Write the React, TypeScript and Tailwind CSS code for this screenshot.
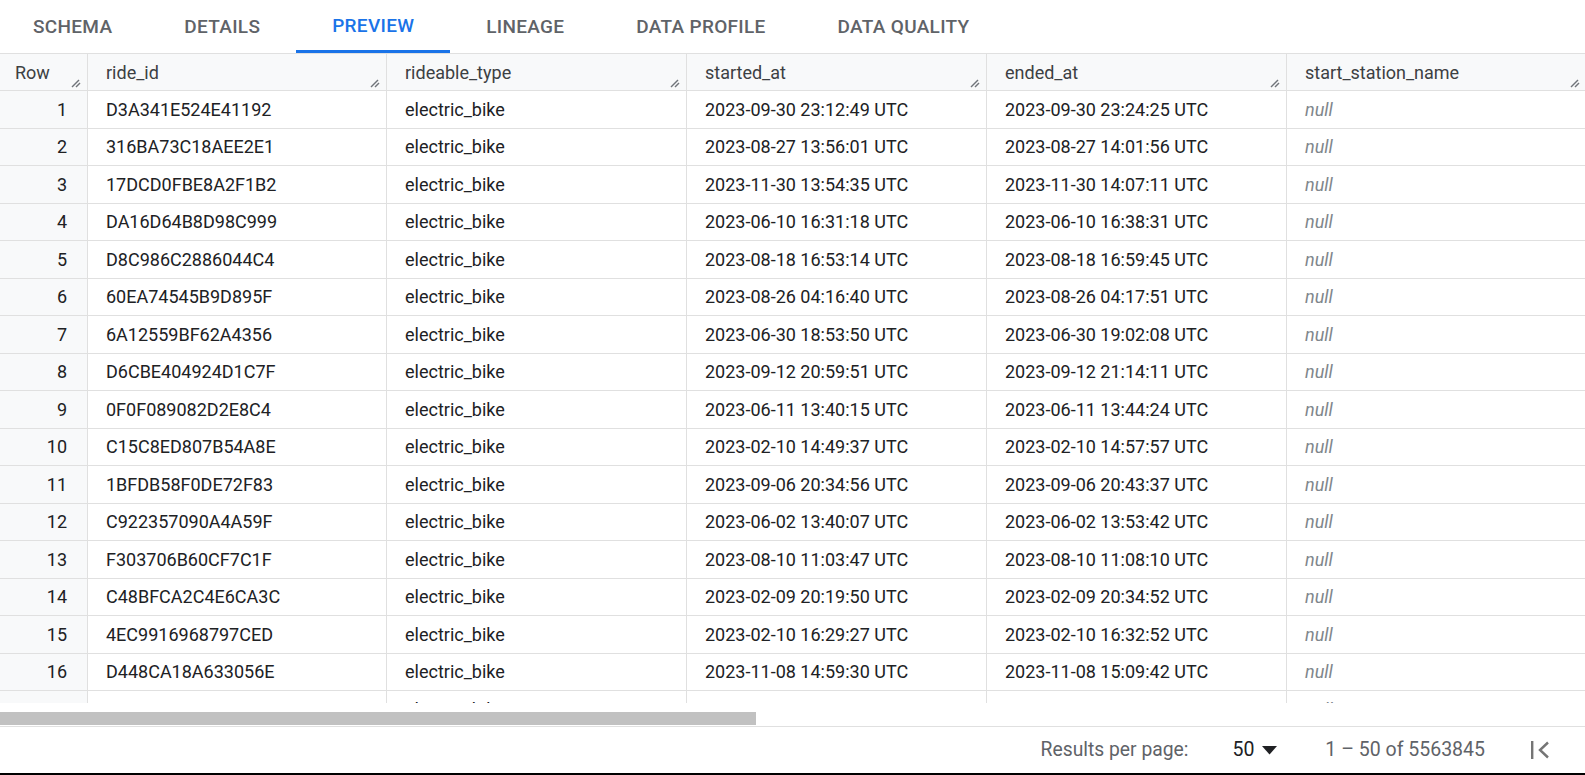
import React from "react";

const tabs = ["SCHEMA", "DETAILS", "PREVIEW", "LINEAGE", "DATA PROFILE", "DATA QUALITY"];

const columns = [
  { name: "ride_id", width: "w-[299px]" },
  { name: "rideable_type", width: "w-[300px]" },
  { name: "started_at", width: "w-[300px]" },
  { name: "ended_at", width: "w-[300px]" },
  { name: "start_station_name", width: "w-[300px]" },
];

const rows = [
  ["D3A341E524E41192", "2023-09-30 23:12:49 UTC", "2023-09-30 23:24:25 UTC"],
  ["316BA73C18AEE2E1", "2023-08-27 13:56:01 UTC", "2023-08-27 14:01:56 UTC"],
  ["17DCD0FBE8A2F1B2", "2023-11-30 13:54:35 UTC", "2023-11-30 14:07:11 UTC"],
  ["DA16D64B8D98C999", "2023-06-10 16:31:18 UTC", "2023-06-10 16:38:31 UTC"],
  ["D8C986C2886044C4", "2023-08-18 16:53:14 UTC", "2023-08-18 16:59:45 UTC"],
  ["60EA74545B9D895F", "2023-08-26 04:16:40 UTC", "2023-08-26 04:17:51 UTC"],
  ["6A12559BF62A4356", "2023-06-30 18:53:50 UTC", "2023-06-30 19:02:08 UTC"],
  ["D6CBE404924D1C7F", "2023-09-12 20:59:51 UTC", "2023-09-12 21:14:11 UTC"],
  ["0F0F089082D2E8C4", "2023-06-11 13:40:15 UTC", "2023-06-11 13:44:24 UTC"],
  ["C15C8ED807B54A8E", "2023-02-10 14:49:37 UTC", "2023-02-10 14:57:57 UTC"],
  ["1BFDB58F0DE72F83", "2023-09-06 20:34:56 UTC", "2023-09-06 20:43:37 UTC"],
  ["C922357090A4A59F", "2023-06-02 13:40:07 UTC", "2023-06-02 13:53:42 UTC"],
  ["F303706B60CF7C1F", "2023-08-10 11:03:47 UTC", "2023-08-10 11:08:10 UTC"],
  ["C48BFCA2C4E6CA3C", "2023-02-09 20:19:50 UTC", "2023-02-09 20:34:52 UTC"],
  ["4EC9916968797CED", "2023-02-10 16:29:27 UTC", "2023-02-10 16:32:52 UTC"],
  ["D448CA18A633056E", "2023-11-08 14:59:30 UTC", "2023-11-08 15:09:42 UTC"],
  ["5B98A50FBF493116", "2023-06-16 14:14:36 UTC", "2023-06-16 14:47:40 UTC"],
];

function ResizeHandle() {
  return (
    <svg className="absolute right-[4px] bottom-[2px]" width="12" height="10" viewBox="0 0 12 10">
      <path d="M1 9 L8 2" stroke="#70757a" strokeWidth="1.4" />
      <path d="M5 9 L9 5" stroke="#70757a" strokeWidth="1.4" />
    </svg>
  );
}

function FirstPageIcon() {
  return (
    <svg width="20" height="20" viewBox="0 0 20 20">
      <rect x="1" y="1" width="2.4" height="18" fill="#757575" />
      <path d="M18 2.5 L10 10 L18 17.5" stroke="#757575" strokeWidth="2.4" fill="none" />
    </svg>
  );
}

export default function App() {
  return (
    <div className="w-[1585px] h-[775px] bg-white flex flex-col overflow-hidden font-['Roboto',sans-serif]">
      <div className="h-[53px] flex shrink-0 -ml-[3px]">
        {tabs.map((t) => (
          <div
            key={t}
            className={
              t === "PREVIEW"
                ? "h-full px-[36px] flex items-center text-[19px] font-medium tracking-[0.3px] text-[#1a73e8] border-b-[3px] border-[#1a73e8] pt-[2px]"
                : "h-full px-[36px] flex items-center text-[19px] font-medium tracking-[0.3px] text-[#5f6368] pt-[2px]"
            }
          >
            {t}
          </div>
        ))}
      </div>

      <div className="h-[650px] overflow-hidden border-t border-[#e0e0e0] shrink-0">
        <div className="flex h-[37px] bg-[#f8f9fa] border-b border-[#e0e0e0] text-[18px] text-[#3c4043]">
          <div className="relative w-[88px] shrink-0 border-r border-[#e0e0e0] pl-[15px] flex items-center">
            Row
            <ResizeHandle />
          </div>
          {columns.map((c) => (
            <div key={c.name} className={`relative ${c.width} shrink-0 border-r border-[#e0e0e0] pl-[18px] flex items-center`}>
              {c.name}
              <ResizeHandle />
            </div>
          ))}
        </div>
        {rows.map((r, i) => (
          <div key={i} className="flex h-[37.5px] border-b border-[#e0e0e0] text-[18px] text-[#202124]">
            <div className="w-[88px] shrink-0 bg-[#f8f9fa] border-r border-[#e0e0e0] pr-[20px] flex items-center justify-end">
              {i + 1}
            </div>
            <div className="w-[299px] shrink-0 border-r border-[#e0e0e0] pl-[18px] flex items-center">{r[0]}</div>
            <div className="w-[300px] shrink-0 border-r border-[#e0e0e0] pl-[18px] flex items-center">electric_bike</div>
            <div className="w-[300px] shrink-0 border-r border-[#e0e0e0] pl-[18px] flex items-center">{r[1]}</div>
            <div className="w-[300px] shrink-0 border-r border-[#e0e0e0] pl-[18px] flex items-center">{r[2]}</div>
            <div className="w-[300px] shrink-0 border-r border-[#e0e0e0] pl-[18px] flex items-center italic text-[#80868b]">
              null
            </div>
          </div>
        ))}
      </div>

      <div className="h-[24px] shrink-0 border-b border-[#e0e0e0] pt-[9px]">
        <div className="w-[756px] h-[13px] bg-[#c1c1c1]" />
      </div>

      <div className="h-[46px] shrink-0 flex items-center justify-end pr-[35px] text-[19.5px] text-[#5f6368]">
        <span className="text-[19.3px]">Results per page:</span>
        <span className="ml-[44px] text-[#202124]">50</span>
        <svg className="ml-[8px]" width="15" height="9" viewBox="0 0 15 9">
          <path d="M0 0 L15 0 L7.5 8.5 Z" fill="#202124" />
        </svg>
        <span className="ml-[48px]">1 – 50 of 5563845</span>
        <span className="ml-[45px] flex items-center">
          <FirstPageIcon />
        </span>
      </div>
      <div className="h-[2px] bg-black shrink-0" />
    </div>
  );
}
